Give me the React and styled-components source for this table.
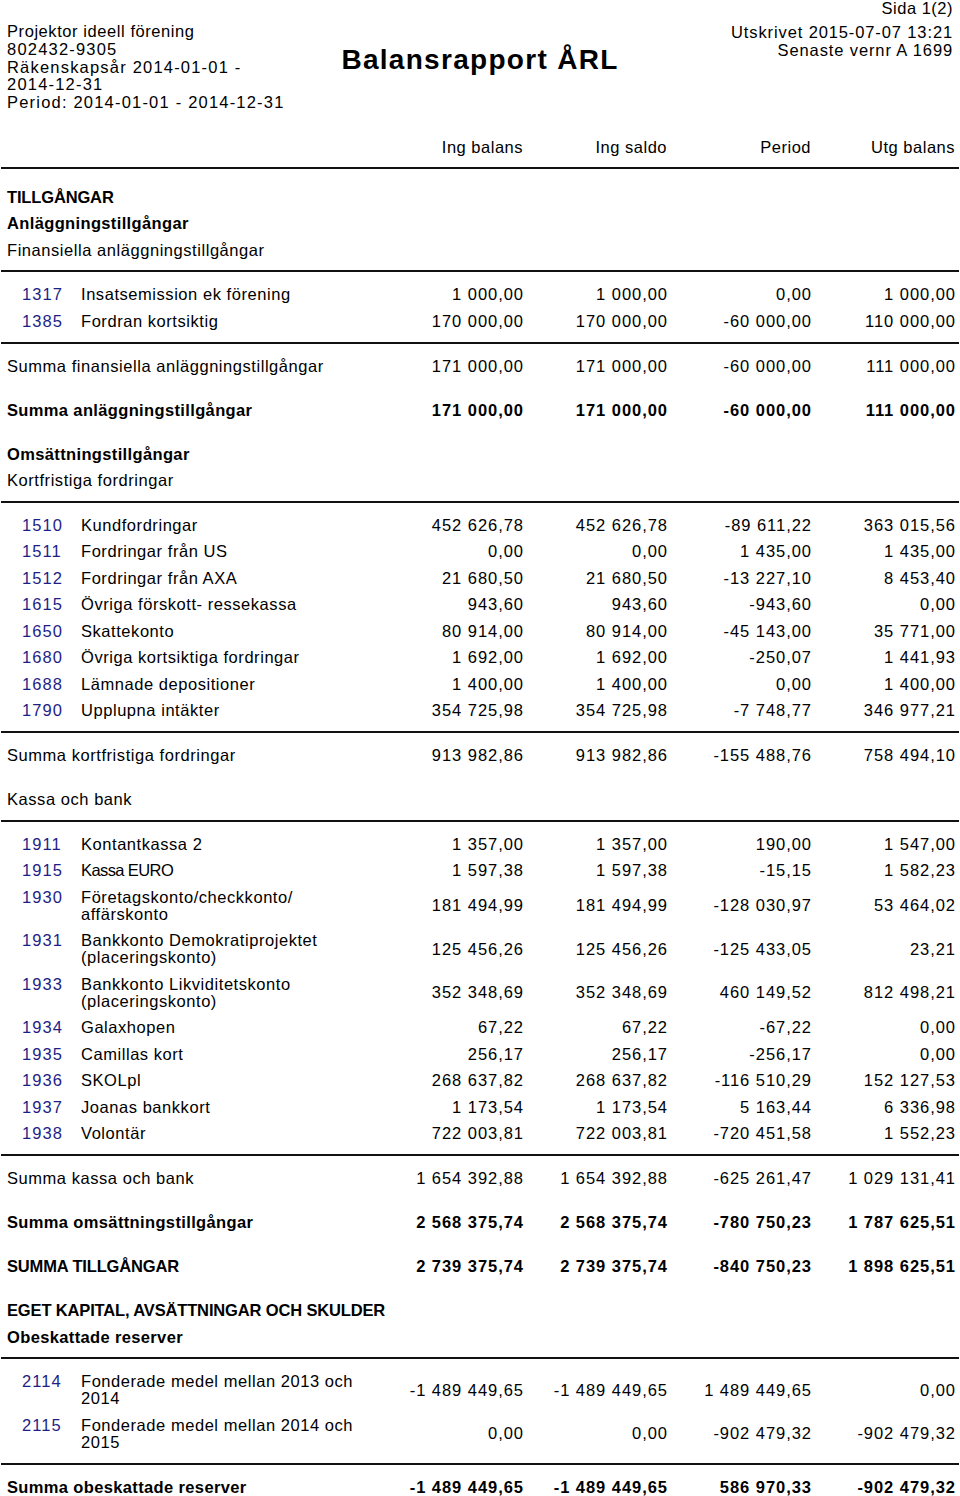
import React from "react";
import styled, { createGlobalStyle } from "styled-components";

const GlobalStyle = createGlobalStyle`
  body {
    margin: 0;
    background: #fff;
    font-family: "Liberation Sans", Arial, Helvetica, sans-serif;
    color: #000;
  }
`;

const Page = styled.div`
  width: 960px;
  font-size: 16.5px;
`;

const PageNo = styled.div`
  height: 16px;
  line-height: 16px;
  margin-bottom: 7px;
  padding-right: 7px;
  text-align: right;
  letter-spacing: 0.5px;
`;

const HeaderMain = styled.div`
  display: grid;
  grid-template-columns: 1fr auto 1fr;
  align-items: start;
`;

const InfoLeft = styled.div`
  padding-left: 7px;
  line-height: 17.75px;
`;

const InfoLine = styled.div`
  letter-spacing: ${(p) => (p.$numeric ? "1.2px" : "0.57px")};
  max-width: ${(p) => (p.$wrap ? "240px" : "none")};
  white-space: ${(p) => (p.$wrap ? "normal" : "nowrap")};
`;

const Title = styled.h1`
  margin: 21px 0 0;
  font-size: 28px;
  line-height: 32px;
  font-weight: 700;
  letter-spacing: 1.3px;
  white-space: nowrap;
`;

const InfoRight = styled.div`
  padding-right: 7px;
  text-align: right;
  line-height: 18px;
  letter-spacing: 0.88px;
`;

const Row = styled.div`
  display: grid;
  grid-template-columns: 22px 59px 1fr repeat(4, 144px);
  align-items: center;
  padding: 4.75px 5px 4.75px 0;
  line-height: 17px;
  font-weight: ${(p) => (p.$bold ? 700 : 400)};
`;

const ColHeadRow = styled(Row)`
  margin-top: 22px;
`;

const ColHead = styled.div`
  grid-column: ${(p) => p.$col || "auto"};
  text-align: right;
  letter-spacing: 0.5px;
  white-space: nowrap;
`;

const Acct = styled.div`
  grid-column: 2;
  align-self: start;
  color: #1e1e86;
  letter-spacing: 1.1px;
`;

const Name = styled.div`
  grid-column: 3;
  align-self: start;
  letter-spacing: ${(p) => (p.$tight ? "-0.6px" : "0.55px")};
  padding-right: 4px;
`;

const SumLabel = styled.div`
  grid-column: 1 / 4;
  padding-left: 7px;
  white-space: nowrap;
  letter-spacing: ${(p) => (p.$tight ? "-0.15px" : p.$bold ? "0.36px" : "0.55px")};
`;

const Amount = styled.div`
  text-align: right;
  white-space: nowrap;
  letter-spacing: 0.95px;
  margin-right: -0.95px;
`;

const SectionHead = styled.div`
  padding: 4.75px 7px;
  line-height: 17px;
  font-weight: ${(p) => (p.$bold ? 700 : 400)};
  letter-spacing: ${(p) => (p.$tight ? "-0.15px" : p.$bold ? "0.36px" : "0.55px")};
`;

const Rule = styled.div`
  height: 2px;
  background: #111;
  margin: 7px 1px ${(p) => (p.$first ? "14.5px" : "9.25px")};
`;

const Gap = styled.div`
  height: 17.5px;
`;

const report = [
  { t: "head", text: "TILLGÅNGAR", bold: true, tight: true },
  { t: "head", text: "Anläggningstillgångar", bold: true },
  { t: "head", text: "Finansiella anläggningstillgångar" },
  { t: "rule" },
  { t: "acct", no: "1317", name: "Insatsemission ek förening", v: ["1 000,00", "1 000,00", "0,00", "1 000,00"] },
  { t: "acct", no: "1385", name: "Fordran kortsiktig", v: ["170 000,00", "170 000,00", "-60 000,00", "110 000,00"] },
  { t: "rule" },
  { t: "sum", text: "Summa finansiella anläggningstillgångar", v: ["171 000,00", "171 000,00", "-60 000,00", "111 000,00"] },
  { t: "gap" },
  { t: "sum", text: "Summa anläggningstillgångar", bold: true, v: ["171 000,00", "171 000,00", "-60 000,00", "111 000,00"] },
  { t: "gap" },
  { t: "head", text: "Omsättningstillgångar", bold: true },
  { t: "head", text: "Kortfristiga fordringar" },
  { t: "rule" },
  { t: "acct", no: "1510", name: "Kundfordringar", v: ["452 626,78", "452 626,78", "-89 611,22", "363 015,56"] },
  { t: "acct", no: "1511", name: "Fordringar från US", v: ["0,00", "0,00", "1 435,00", "1 435,00"] },
  { t: "acct", no: "1512", name: "Fordringar från AXA", v: ["21 680,50", "21 680,50", "-13 227,10", "8 453,40"] },
  { t: "acct", no: "1615", name: "Övriga förskott- ressekassa", v: ["943,60", "943,60", "-943,60", "0,00"] },
  { t: "acct", no: "1650", name: "Skattekonto", v: ["80 914,00", "80 914,00", "-45 143,00", "35 771,00"] },
  { t: "acct", no: "1680", name: "Övriga kortsiktiga fordringar", v: ["1 692,00", "1 692,00", "-250,07", "1 441,93"] },
  { t: "acct", no: "1688", name: "Lämnade depositioner", v: ["1 400,00", "1 400,00", "0,00", "1 400,00"] },
  { t: "acct", no: "1790", name: "Upplupna intäkter", v: ["354 725,98", "354 725,98", "-7 748,77", "346 977,21"] },
  { t: "rule" },
  { t: "sum", text: "Summa kortfristiga fordringar", v: ["913 982,86", "913 982,86", "-155 488,76", "758 494,10"] },
  { t: "gap" },
  { t: "head", text: "Kassa och bank" },
  { t: "rule" },
  { t: "acct", no: "1911", name: "Kontantkassa 2", v: ["1 357,00", "1 357,00", "190,00", "1 547,00"] },
  { t: "acct", no: "1915", name: "Kassa EURO", tight: true, v: ["1 597,38", "1 597,38", "-15,15", "1 582,23"] },
  { t: "acct", no: "1930", name: "Företagskonto/checkkonto/\u200baffärskonto", v: ["181 494,99", "181 494,99", "-128 030,97", "53 464,02"] },
  { t: "acct", no: "1931", name: "Bankkonto Demokratiprojektet (placeringskonto)", v: ["125 456,26", "125 456,26", "-125 433,05", "23,21"] },
  { t: "acct", no: "1933", name: "Bankkonto Likviditetskonto (placeringskonto)", v: ["352 348,69", "352 348,69", "460 149,52", "812 498,21"] },
  { t: "acct", no: "1934", name: "Galaxhopen", v: ["67,22", "67,22", "-67,22", "0,00"] },
  { t: "acct", no: "1935", name: "Camillas kort", v: ["256,17", "256,17", "-256,17", "0,00"] },
  { t: "acct", no: "1936", name: "SKOLpl", v: ["268 637,82", "268 637,82", "-116 510,29", "152 127,53"] },
  { t: "acct", no: "1937", name: "Joanas bankkort", v: ["1 173,54", "1 173,54", "5 163,44", "6 336,98"] },
  { t: "acct", no: "1938", name: "Volontär", v: ["722 003,81", "722 003,81", "-720 451,58", "1 552,23"] },
  { t: "rule" },
  { t: "sum", text: "Summa kassa och bank", v: ["1 654 392,88", "1 654 392,88", "-625 261,47", "1 029 131,41"] },
  { t: "gap" },
  { t: "sum", text: "Summa omsättningstillgångar", bold: true, v: ["2 568 375,74", "2 568 375,74", "-780 750,23", "1 787 625,51"] },
  { t: "gap" },
  { t: "sum", text: "SUMMA TILLGÅNGAR", bold: true, tight: true, v: ["2 739 375,74", "2 739 375,74", "-840 750,23", "1 898 625,51"] },
  { t: "gap" },
  { t: "head", text: "EGET KAPITAL, AVSÄTTNINGAR OCH SKULDER", bold: true, tight: true },
  { t: "head", text: "Obeskattade reserver", bold: true },
  { t: "rule" },
  { t: "acct", no: "2114", name: "Fonderade medel mellan 2013 och 2014", v: ["-1 489 449,65", "-1 489 449,65", "1 489 449,65", "0,00"] },
  { t: "acct", no: "2115", name: "Fonderade medel mellan 2014 och 2015", v: ["0,00", "0,00", "-902 479,32", "-902 479,32"] },
  { t: "rule" },
  { t: "sum", text: "Summa obeskattade reserver", bold: true, v: ["-1 489 449,65", "-1 489 449,65", "586 970,33", "-902 479,32"] },
];

function Amounts({ values }) {
  return values.map((v, i) => <Amount key={i}>{v}</Amount>);
}

function ReportItem({ item }) {
  switch (item.t) {
    case "head":
      return (
        <SectionHead $bold={item.bold} $tight={item.tight}>
          {item.text}
        </SectionHead>
      );
    case "rule":
      return <Rule />;
    case "gap":
      return <Gap />;
    case "acct":
      return (
        <Row>
          <Acct>{item.no}</Acct>
          <Name $tight={item.tight}>{item.name}</Name>
          <Amounts values={item.v} />
        </Row>
      );
    case "sum":
      return (
        <Row $bold={item.bold}>
          <SumLabel $bold={item.bold} $tight={item.tight}>
            {item.text}
          </SumLabel>
          <Amounts values={item.v} />
        </Row>
      );
    default:
      return null;
  }
}

export default function App() {
  return (
    <>
      <GlobalStyle />
      <Page>
        <PageNo>Sida 1(2)</PageNo>
        <HeaderMain>
          <InfoLeft>
            <InfoLine>Projektor ideell förening</InfoLine>
            <InfoLine $numeric>802432-9305</InfoLine>
            <InfoLine $numeric $wrap>
              Räkenskapsår 2014-01-01 - 2014-12-31
            </InfoLine>
            <InfoLine $numeric>Period: 2014-01-01 - 2014-12-31</InfoLine>
          </InfoLeft>
          <Title>Balansrapport ÅRL</Title>
          <InfoRight>
            <div>Utskrivet 2015-07-07 13:21</div>
            <div>Senaste vernr A 1699</div>
          </InfoRight>
        </HeaderMain>
        <ColHeadRow>
          <ColHead $col={4}>Ing balans</ColHead>
          <ColHead>Ing saldo</ColHead>
          <ColHead>Period</ColHead>
          <ColHead>Utg balans</ColHead>
        </ColHeadRow>
        <Rule $first />
        {report.map((item, i) => (
          <ReportItem key={i} item={item} />
        ))}
      </Page>
    </>
  );
}
